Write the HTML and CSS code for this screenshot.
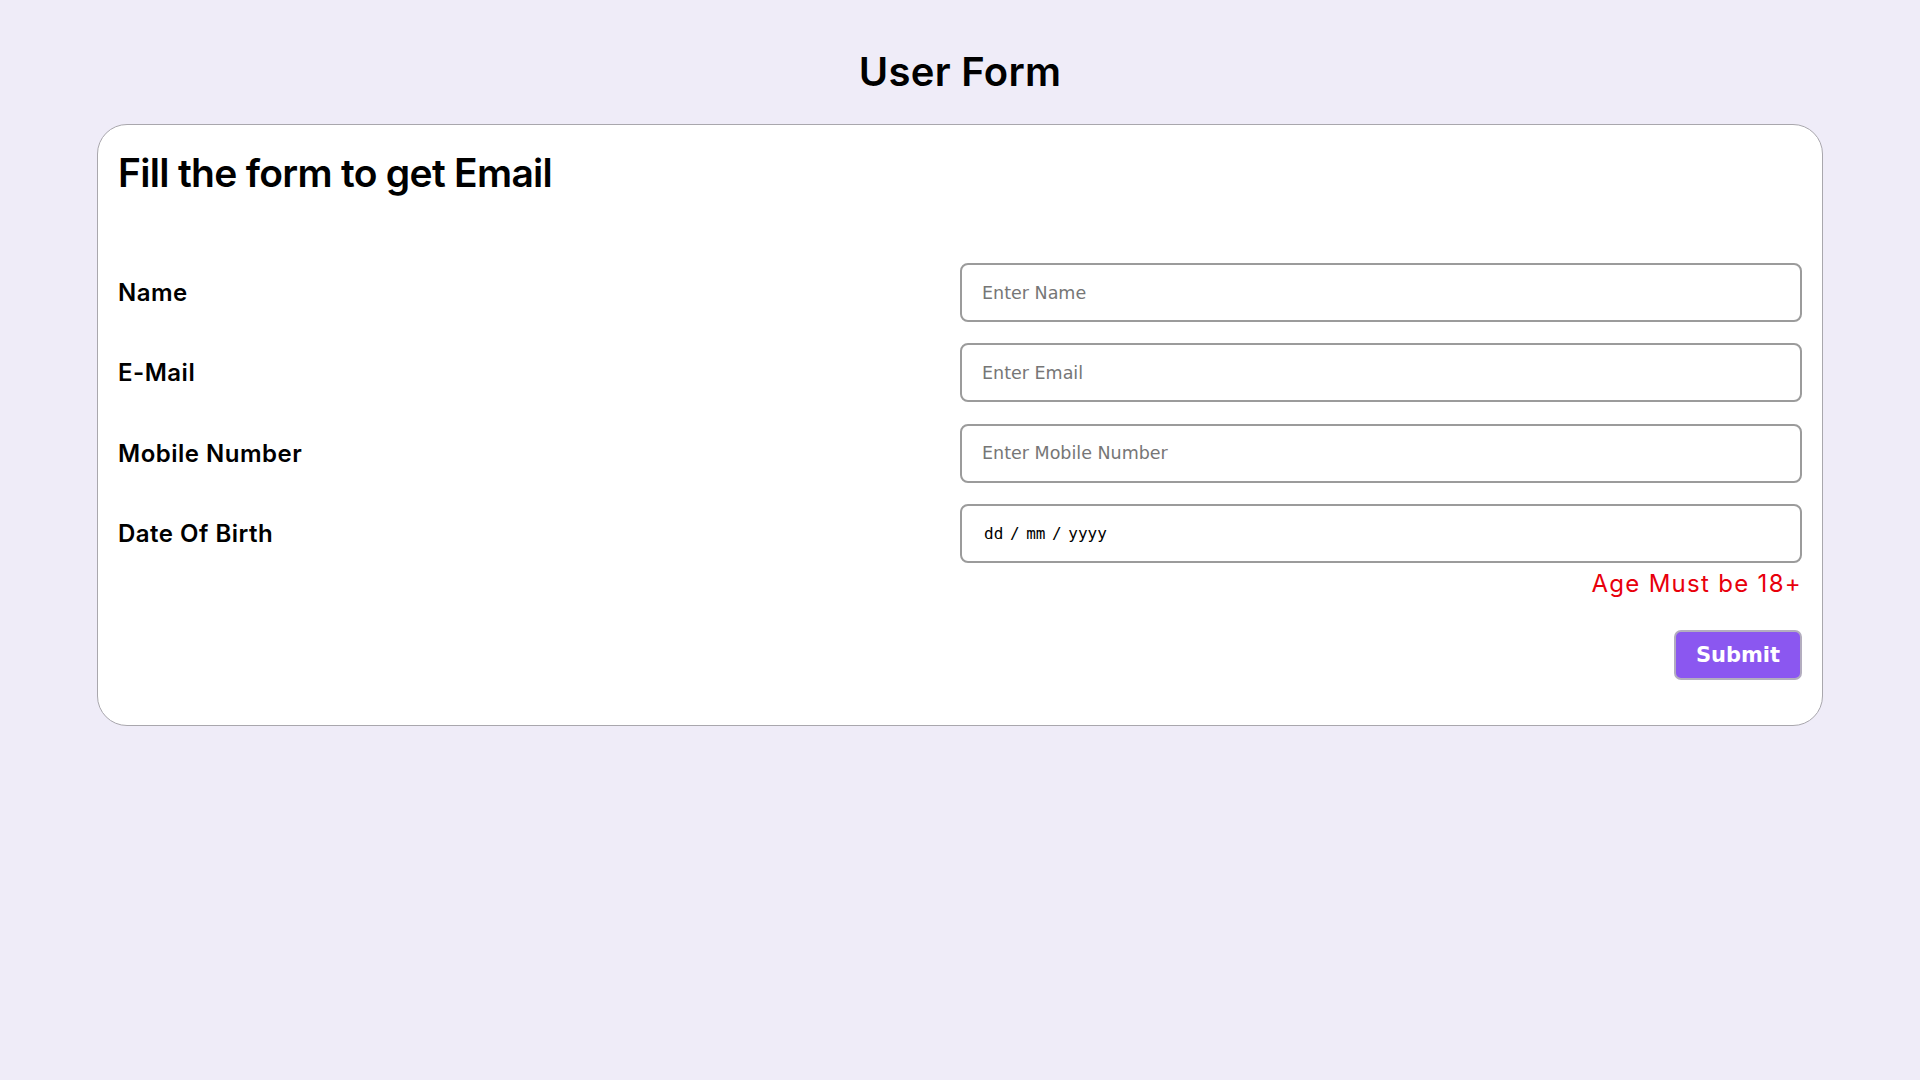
FILE: index.html
```html
<!DOCTYPE html>
<html lang="en">
<head>
<meta charset="utf-8">
<title>User Form</title>
<link rel="stylesheet" href="styles.css">
</head>
<body>
  <h1 class="page-title">User Form</h1>
  <form class="card">
    <h2 class="card-title">Fill the form to get Email</h2>
    <div class="fields">
      <label class="field-label" for="name">Name</label>
      <input class="field-input" id="name" type="text" placeholder="Enter Name">
      <label class="field-label" for="email">E-Mail</label>
      <input class="field-input" id="email" type="text" placeholder="Enter Email">
      <label class="field-label" for="mobile">Mobile Number</label>
      <input class="field-input" id="mobile" type="text" placeholder="Enter Mobile Number">
      <label class="field-label" for="dob">Date Of Birth</label>
      <input class="field-input date-input" id="dob" type="text" value="dd / mm / yyyy">
    </div>
    <p class="error">Age Must be 18+</p>
    <div class="actions">
      <button class="submit" type="button">Submit</button>
    </div>
  </form>
</body>
</html>
```
FILE: styles.css
```css
* { box-sizing: border-box; }

body {
  margin: 0;
  padding-top: 48px;
  background: #efecf8;
  font-family: Inter, "Noto Sans", sans-serif;
  color: #000;
}

.page-title {
  margin: 0;
  font-size: 40px;
  line-height: 48px;
  font-weight: 600;
  text-align: center;
  letter-spacing: 0.3px;
}

.card {
  width: 1726px;
  margin: 28px auto 0;
  background: #fff;
  border: 1px solid #a9a7ad;
  border-radius: 30px;
  padding: 24px 20px 21px;
}

.card-title {
  margin: 0;
  font-size: 39px;
  line-height: 48px;
  font-weight: 600;
  letter-spacing: -0.7px;
}

.fields {
  margin-top: 66px;
  display: grid;
  grid-template-columns: 1fr 1fr;
  row-gap: 21.3px;
  align-items: center;
}

.field-label {
  font-size: 24px;
  font-weight: 600;
  letter-spacing: 0.5px;
}

.field-input {
  height: 59px;
  width: 100%;
  border: 2px solid #9b9b9b;
  border-radius: 8px;
  padding: 0 20px;
  font-family: "DejaVu Sans", sans-serif;
  font-size: 17.5px;
  color: #000;
  background: #fff;
  outline: none;
}

.field-input::placeholder { color: #767676; }

.date-input {
  font-family: "DejaVu Sans Mono", monospace;
  font-size: 16px;
  word-spacing: -3px;
  padding-left: 22px;
}

.error {
  margin: 6px 0 0;
  text-align: right;
  font-size: 24px;
  line-height: 29px;
  letter-spacing: 1.3px;
  color: #e8000b;
}

.actions {
  display: flex;
  justify-content: flex-end;
  margin-top: 32px;
  margin-bottom: 24px;
}

.submit {
  width: 128px;
  height: 50px;
  background: #8b57f0;
  border: 2px solid #b3adbf;
  border-radius: 7px;
  color: #fff;
  font-family: "DejaVu Sans", sans-serif;
  font-weight: 700;
  font-size: 21px;
  padding: 0;
}
```
